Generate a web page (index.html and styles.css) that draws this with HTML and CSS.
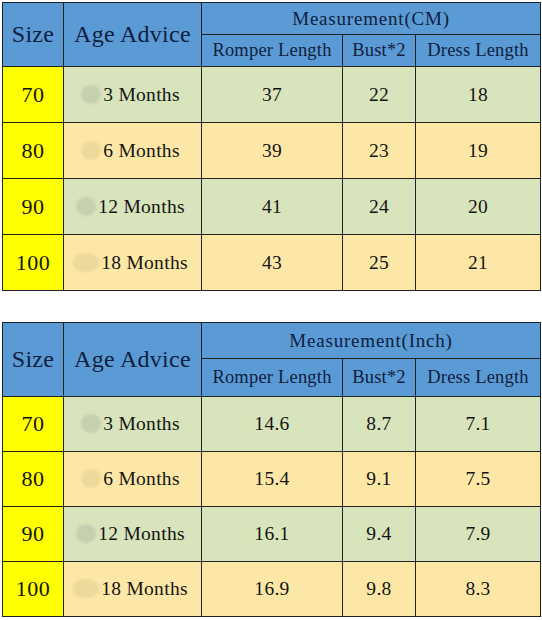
FILE: index.html
```html
<!DOCTYPE html>
<html lang="en">
<head>
    <meta charset="UTF-8">
    <meta name="viewport" content="width=device-width, initial-scale=1.0">
    <title>Size Chart</title>
    <link rel="stylesheet" href="styles.css">
</head>
<body>
    <table class="chart chart-cm">
        <colgroup>
            <col class="c-size"><col class="c-age"><col class="c-romper"><col class="c-bust"><col class="c-dress">
        </colgroup>
        <tr class="head-top">
            <th rowspan="2" class="big">Size</th>
            <th rowspan="2" class="big">Age Advice</th>
            <th colspan="3" class="title">Measurement(CM)</th>
        </tr>
        <tr class="head-sub">
            <th>Romper Length</th>
            <th>Bust*2</th>
            <th>Dress Length</th>
        </tr>
        <tr class="row green">
            <td class="size">70</td>
            <td class="age"><span class="blob"></span>3 Months</td>
            <td>37</td><td>22</td><td>18</td>
        </tr>
        <tr class="row orange">
            <td class="size">80</td>
            <td class="age"><span class="blob"></span>6 Months</td>
            <td>39</td><td>23</td><td>19</td>
        </tr>
        <tr class="row green">
            <td class="size">90</td>
            <td class="age"><span class="blob"></span>12 Months</td>
            <td>41</td><td>24</td><td>20</td>
        </tr>
        <tr class="row orange">
            <td class="size">100</td>
            <td class="age"><span class="blob wide"></span>18 Months</td>
            <td>43</td><td>25</td><td>21</td>
        </tr>
    </table>

    <table class="chart chart-inch">
        <colgroup>
            <col class="c-size"><col class="c-age"><col class="c-romper"><col class="c-bust"><col class="c-dress">
        </colgroup>
        <tr class="head-top">
            <th rowspan="2" class="big">Size</th>
            <th rowspan="2" class="big">Age Advice</th>
            <th colspan="3" class="title">Measurement(Inch)</th>
        </tr>
        <tr class="head-sub">
            <th>Romper Length</th>
            <th>Bust*2</th>
            <th>Dress Length</th>
        </tr>
        <tr class="row green">
            <td class="size">70</td>
            <td class="age"><span class="blob"></span>3 Months</td>
            <td>14.6</td><td>8.7</td><td>7.1</td>
        </tr>
        <tr class="row orange">
            <td class="size">80</td>
            <td class="age"><span class="blob"></span>6 Months</td>
            <td>15.4</td><td>9.1</td><td>7.5</td>
        </tr>
        <tr class="row green">
            <td class="size">90</td>
            <td class="age"><span class="blob"></span>12 Months</td>
            <td>16.1</td><td>9.4</td><td>7.9</td>
        </tr>
        <tr class="row orange">
            <td class="size">100</td>
            <td class="age"><span class="blob wide"></span>18 Months</td>
            <td>16.9</td><td>9.8</td><td>8.3</td>
        </tr>
    </table>
</body>
</html>
```

FILE: styles.css
```css
body {
    margin: 0;
    padding: 2px 0 0 2px;
    background: #fff;
    font-family: "Liberation Serif", "Times New Roman", serif;
}
.chart {
    border-collapse: collapse;
    table-layout: fixed;
    width: 538px;
    color: #141414;
}
.chart-inch {
    margin-top: 31px;
}
.c-size { width: 61px; }
.c-age { width: 138px; }
.c-romper { width: 141px; }
.c-bust { width: 73px; }
.c-dress { width: 125px; }
.chart th, .chart td {
    border: 1.5px solid #222;
    text-align: center;
    vertical-align: middle;
    padding: 0;
}
.chart th {
    background: #5b9bd5;
    color: #10203f;
    font-weight: normal;
    font-size: 18.5px;
    letter-spacing: 0.2px;
}
.chart th.big {
    font-size: 24px;
    letter-spacing: 0.3px;
}
.chart th.title {
    font-size: 19px;
    letter-spacing: 0.8px;
}
.chart-cm .head-top { height: 32px; }
.chart-cm .head-sub { height: 32px; }
.chart-cm .row { height: 56px; }
.chart-inch .head-top { height: 36px; }
.chart-inch .head-sub { height: 38px; }
.chart-inch .row { height: 55px; }
.chart td {
    font-size: 19.5px;
    letter-spacing: 0.3px;
}
.green td { background: #d8e4bc; }
.orange td { background: #fde7a6; }
.chart td.size {
    background: #ffff00;
    font-size: 22px;
    letter-spacing: 0.5px;
}
.age {
    white-space: nowrap;
}
.blob {
    display: inline-block;
    width: 20px;
    height: 19px;
    margin: 0 2px 0 -4px;
    vertical-align: -3px;
    border-radius: 50%;
    filter: blur(1px);
}
.blob.wide {
    width: 26px;
    border-radius: 45%;
}
.green .blob { background: #c4d0af; }
.orange .blob { background: #eed99c; }
```
